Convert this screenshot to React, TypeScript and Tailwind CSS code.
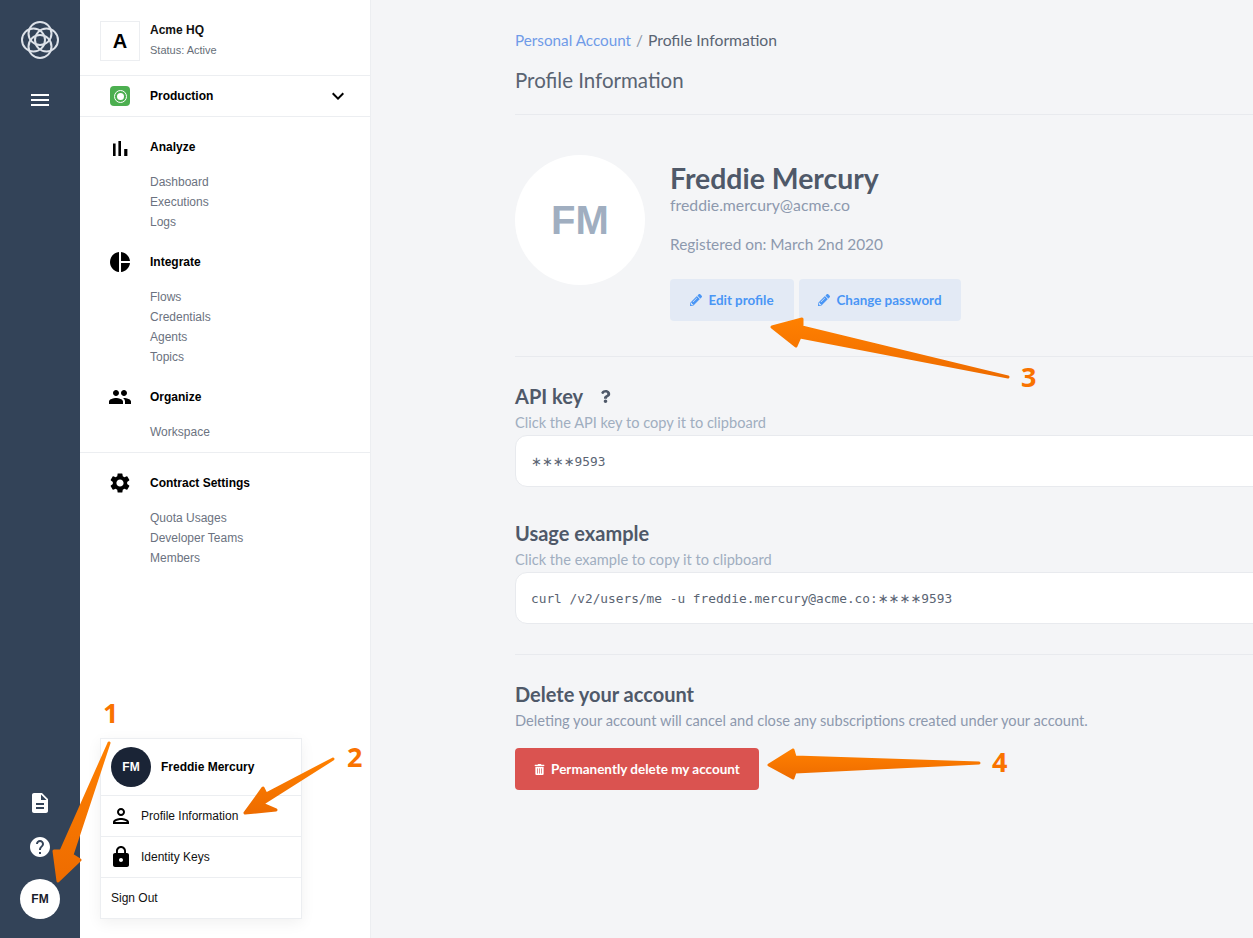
import { FaPencilAlt, FaQuestion, FaTrashAlt } from 'react-icons/fa';
import {
  MdDescription,
  MdExpandMore,
  MdGroup,
  MdHelp,
  MdLock,
  MdMenu,
  MdOutlinePerson,
  MdPieChart,
  MdSettings,
} from 'react-icons/md';

function BarsIcon({ className, size }: { className?: string; size?: number }) {
  return (
    <svg className={className} width={size} height={size} viewBox="0 0 24 24" fill="currentColor">
      <rect x="5" y="8.5" width="2.6" height="12.5" />
      <rect x="10.4" y="6" width="2.6" height="15" />
      <rect x="16.2" y="14" width="3.2" height="7" />
    </svg>
  );
}

const NAV_SECTIONS = [
  { title: 'Analyze', Icon: BarsIcon, items: ['Dashboard', 'Executions', 'Logs'] },
  { title: 'Integrate', Icon: MdPieChart, items: ['Flows', 'Credentials', 'Agents', 'Topics'] },
  { title: 'Organize', Icon: MdGroup, items: ['Workspace'] },
];

const SETTINGS_ITEMS = ['Quota Usages', 'Developer Teams', 'Members'];

const ANNOTATIONS = [
  { label: '1', className: 'left-[103px] top-[695px]' },
  { label: '2', className: 'left-[347px] top-[739px]' },
  { label: '3', className: 'left-[1021px] top-[359px]' },
  { label: '4', className: 'left-[992px] top-[744px]' },
];

function Logo() {
  return (
    <svg width="38" height="38" viewBox="0 0 38 38" fill="none" stroke="#dde2e9" strokeWidth="2">
      <circle cx="19" cy="12.5" r="11.5" />
      <circle cx="19" cy="25.5" r="11.5" />
      <circle cx="12.5" cy="19" r="11.5" />
      <circle cx="25.5" cy="19" r="11.5" />
    </svg>
  );
}

function Arrows() {
  return (
    <svg className="pointer-events-none absolute left-0 top-0" width="1253" height="938" fill="none">
      <defs>
        <linearGradient id="arrowFill" x1="0" y1="0" x2="0" y2="1">
          <stop offset="0" stopColor="#ff8000" />
          <stop offset="1" stopColor="#ee6c00" />
        </linearGradient>
      </defs>
      <g fill="url(#arrowFill)" stroke="url(#arrowFill)" strokeWidth="3" strokeLinejoin="round">
        <path d="M109 743 L61 851 L54 851 L58 881 L80 860 L72 855 Z" />
        <path d="M333 759 L266 794 L263 788 L245 813 L276 810 L262 804 Z" />
        <path d="M1008 377 L802 327 L802 319 L772 327 L796 346 L800 337 Z" />
        <path d="M979 763 L795 757 L793 750 L769 765 L793 778 L795 772 Z" />
      </g>
    </svg>
  );
}

function Mask() {
  // the mask glyphs come out wider than the mono cell in the original
  return <span className="font-['DejaVu_Sans',sans-serif] text-[13px]">∗∗∗∗</span>;
}

export default function App() {
  return (
    <div className="relative flex h-screen overflow-hidden bg-[#f4f5f7] font-['Liberation_Sans',sans-serif]">
      <aside className="flex w-20 shrink-0 flex-col items-center bg-[#334358] pb-[19px]">
        <div className="mt-[21px] flex h-[38px] items-center">
          <Logo />
        </div>
        <MdMenu className="mt-[29px] text-white" size={24} />
        <MdDescription className="mt-auto text-white" size={24} />
        <MdHelp className="mt-5 text-white" size={24} />
        <div className="mt-5 flex h-10 w-10 items-center justify-center rounded-full bg-white text-xs font-bold text-[#1a202c]">
          FM
        </div>
      </aside>

      <nav className="relative w-[291px] shrink-0 border-r border-[#eceef1] bg-white">
        <div className="flex h-[76px] items-start border-b border-[#eceef1] pl-5 pt-[21px]">
          <div className="flex h-10 w-10 items-center justify-center border border-[#eceef1] text-xl font-bold text-black">
            A
          </div>
          <div className="ml-[10px] text-xs">
            <div className="mt-px h-4 font-bold leading-4 text-[#111]">Acme HQ</div>
            <div className="mt-1 text-[11px] leading-4 text-[#666e78]">Status: Active</div>
          </div>
        </div>

        <div className="flex h-[41px] items-center border-b border-[#eceef1] pr-5 text-xs font-bold text-black">
          <div className="ml-[30px] flex h-5 w-5 items-center justify-center rounded-sm bg-[#4caf50]">
            <div className="flex h-[13px] w-[13px] items-center justify-center rounded-full border border-white">
              <div className="h-[7px] w-[7px] rounded-full bg-white" />
            </div>
          </div>
          <span className="ml-5">Production</span>
          <MdExpandMore className="ml-auto" size={24} />
        </div>

        <div className="flex flex-col gap-5 pt-5">
          {NAV_SECTIONS.map(({ title, Icon, items }) => (
            <section key={title}>
              <div className="flex h-5 items-center text-xs font-bold text-black">
                <Icon className="ml-7" size={24} />
                <span className="ml-[18px]">{title}</span>
              </div>
              <ul className="mt-[15px] pl-[70px] text-xs leading-5 text-[#6b7280]">
                {items.map((item) => (
                  <li key={item}>{item}</li>
                ))}
              </ul>
            </section>
          ))}
        </div>

        <div className="mt-[10px] border-t border-[#eceef1] pt-5">
          <div className="flex h-5 items-center text-xs font-bold text-black">
            <MdSettings className="ml-7" size={24} />
            <span className="ml-[18px]">Contract Settings</span>
          </div>
          <ul className="mt-[15px] pl-[70px] text-xs leading-5 text-[#6b7280]">
            {SETTINGS_ITEMS.map((item) => (
              <li key={item}>{item}</li>
            ))}
          </ul>
        </div>

        <div className="absolute left-5 top-[738px] w-[202px] border border-[#eceef1] bg-white text-xs shadow-[0_4px_14px_rgba(0,0,0,0.06)]">
          <div className="flex h-[57px] items-center border-b border-[#eceef1] pl-[10px] font-bold text-black">
            <div className="flex h-10 w-10 items-center justify-center rounded-full bg-[#1a2436] text-white">FM</div>
            <span className="ml-[10px]">Freddie Mercury</span>
          </div>
          <div className="flex h-[41px] items-center border-b border-[#eceef1] pl-2 text-[#111]">
            <MdOutlinePerson size={24} className="text-black" />
            <span className="ml-2">Profile Information</span>
          </div>
          <div className="flex h-[41px] items-center border-b border-[#eceef1] pl-2 text-[#111]">
            <MdLock size={24} className="text-black" />
            <span className="ml-2">Identity Keys</span>
          </div>
          <div className="flex h-10 items-center pl-[10px] text-[#111]">Sign Out</div>
        </div>
      </nav>

      <main className="min-w-0 flex-1 font-['Lato',sans-serif] text-[#5a6473]">
        <div className="ml-[144px] w-[900px]">
          <div className="pt-[30px] text-[15.25px] leading-5">
            <span className="text-[#6f9be8]">Personal Account</span>
            <span className="mx-[5px] text-[#8a94a6]">/</span>
            <span className="text-[15.7px]">Profile Information</span>
          </div>
          <h1 className="mt-[18px] text-[20.5px] leading-6 text-[#5a6473]">Profile Information</h1>
          <div className="mt-[22px] border-t border-[#e8eaee]" />

          <div className="flex pt-10">
            <div className="flex h-[130px] w-[130px] items-center justify-center rounded-full bg-white font-['Liberation_Sans',sans-serif] text-[40px] font-bold text-[#a0aec0]">
              FM
            </div>
            <div className="ml-[25px]">
              <div className="mt-[7px] text-[28.4px] font-bold leading-8 text-[#4f5969]">Freddie Mercury</div>
              <div className="mt-px text-[15.8px] leading-5 text-[#8d99ae]">freddie.mercury@acme.co</div>
              <div className="mt-[19px] text-[15.4px] leading-5 text-[#8d99ae]">Registered on: March 2nd 2020</div>
              <div className="mt-[25px] flex gap-[5px] text-[13.4px] font-bold text-[#4a96f5]">
                <button className="flex h-[42px] w-[124px] items-center justify-center gap-[6px] rounded bg-[#e3eaf5]">
                  <FaPencilAlt size={12} />
                  Edit profile
                </button>
                <button className="flex h-[42px] w-[162px] items-center justify-center gap-[6px] rounded bg-[#e3eaf5]">
                  <FaPencilAlt size={12} />
                  Change password
                </button>
              </div>
            </div>
          </div>
          <div className="mt-[35px] border-t border-[#e8eaee]" />

          <h2 className="mt-[27px] flex items-center text-xl font-bold leading-6 text-[#4f5969]">
            API key
            <FaQuestion className="ml-4" size={13} />
          </h2>
          <p className="mt-[5px] text-[14.6px] leading-5 text-[#a0aec0]">Click the API key to copy it to clipboard</p>
          <div className="mt-[2px] flex h-[52px] items-center rounded-xl border border-[#e8eaee] bg-white pl-[15px] pt-[2px] font-['DejaVu_Sans_Mono',monospace] text-[12.8px] text-[#5a6473]">
            <span>
              <Mask />
              9593
            </span>
          </div>

          <h2 className="mt-[34px] text-xl font-bold leading-6 text-[#4f5969]">Usage example</h2>
          <p className="mt-[5px] text-[14.6px] leading-5 text-[#a0aec0]">Click the example to copy it to clipboard</p>
          <div className="mt-[2px] flex h-[52px] items-center rounded-xl border border-[#e8eaee] bg-white pl-[15px] pt-[2px] font-['DejaVu_Sans_Mono',monospace] text-[12.8px] text-[#5a6473]">
            <span>
              curl /v2/users/me -u freddie.mercury@acme.co:
              <Mask />
              9593
            </span>
          </div>
          <div className="mt-[30px] border-t border-[#e8eaee]" />

          <h2 className="mt-[27px] text-xl font-bold leading-6 text-[#4f5969]">Delete your account</h2>
          <p className="mt-[5px] text-[14.65px] leading-5 text-[#8d99ae]">
            Deleting your account will cancel and close any subscriptions created under your account.
          </p>
          <button className="mt-[17px] flex h-[42px] w-[244px] items-center justify-center gap-[6px] rounded bg-[#da5350] text-[13.5px] font-bold text-white">
            <FaTrashAlt size={11} />
            Permanently delete my account
          </button>
        </div>
      </main>

      <Arrows />
      {ANNOTATIONS.map(({ label, className }) => (
        <span
          key={label}
          className={`absolute font-['Open_Sans',sans-serif] text-[27px] font-bold leading-9 text-[#f97300] ${className}`}
        >
          {label}
        </span>
      ))}
    </div>
  );
}
